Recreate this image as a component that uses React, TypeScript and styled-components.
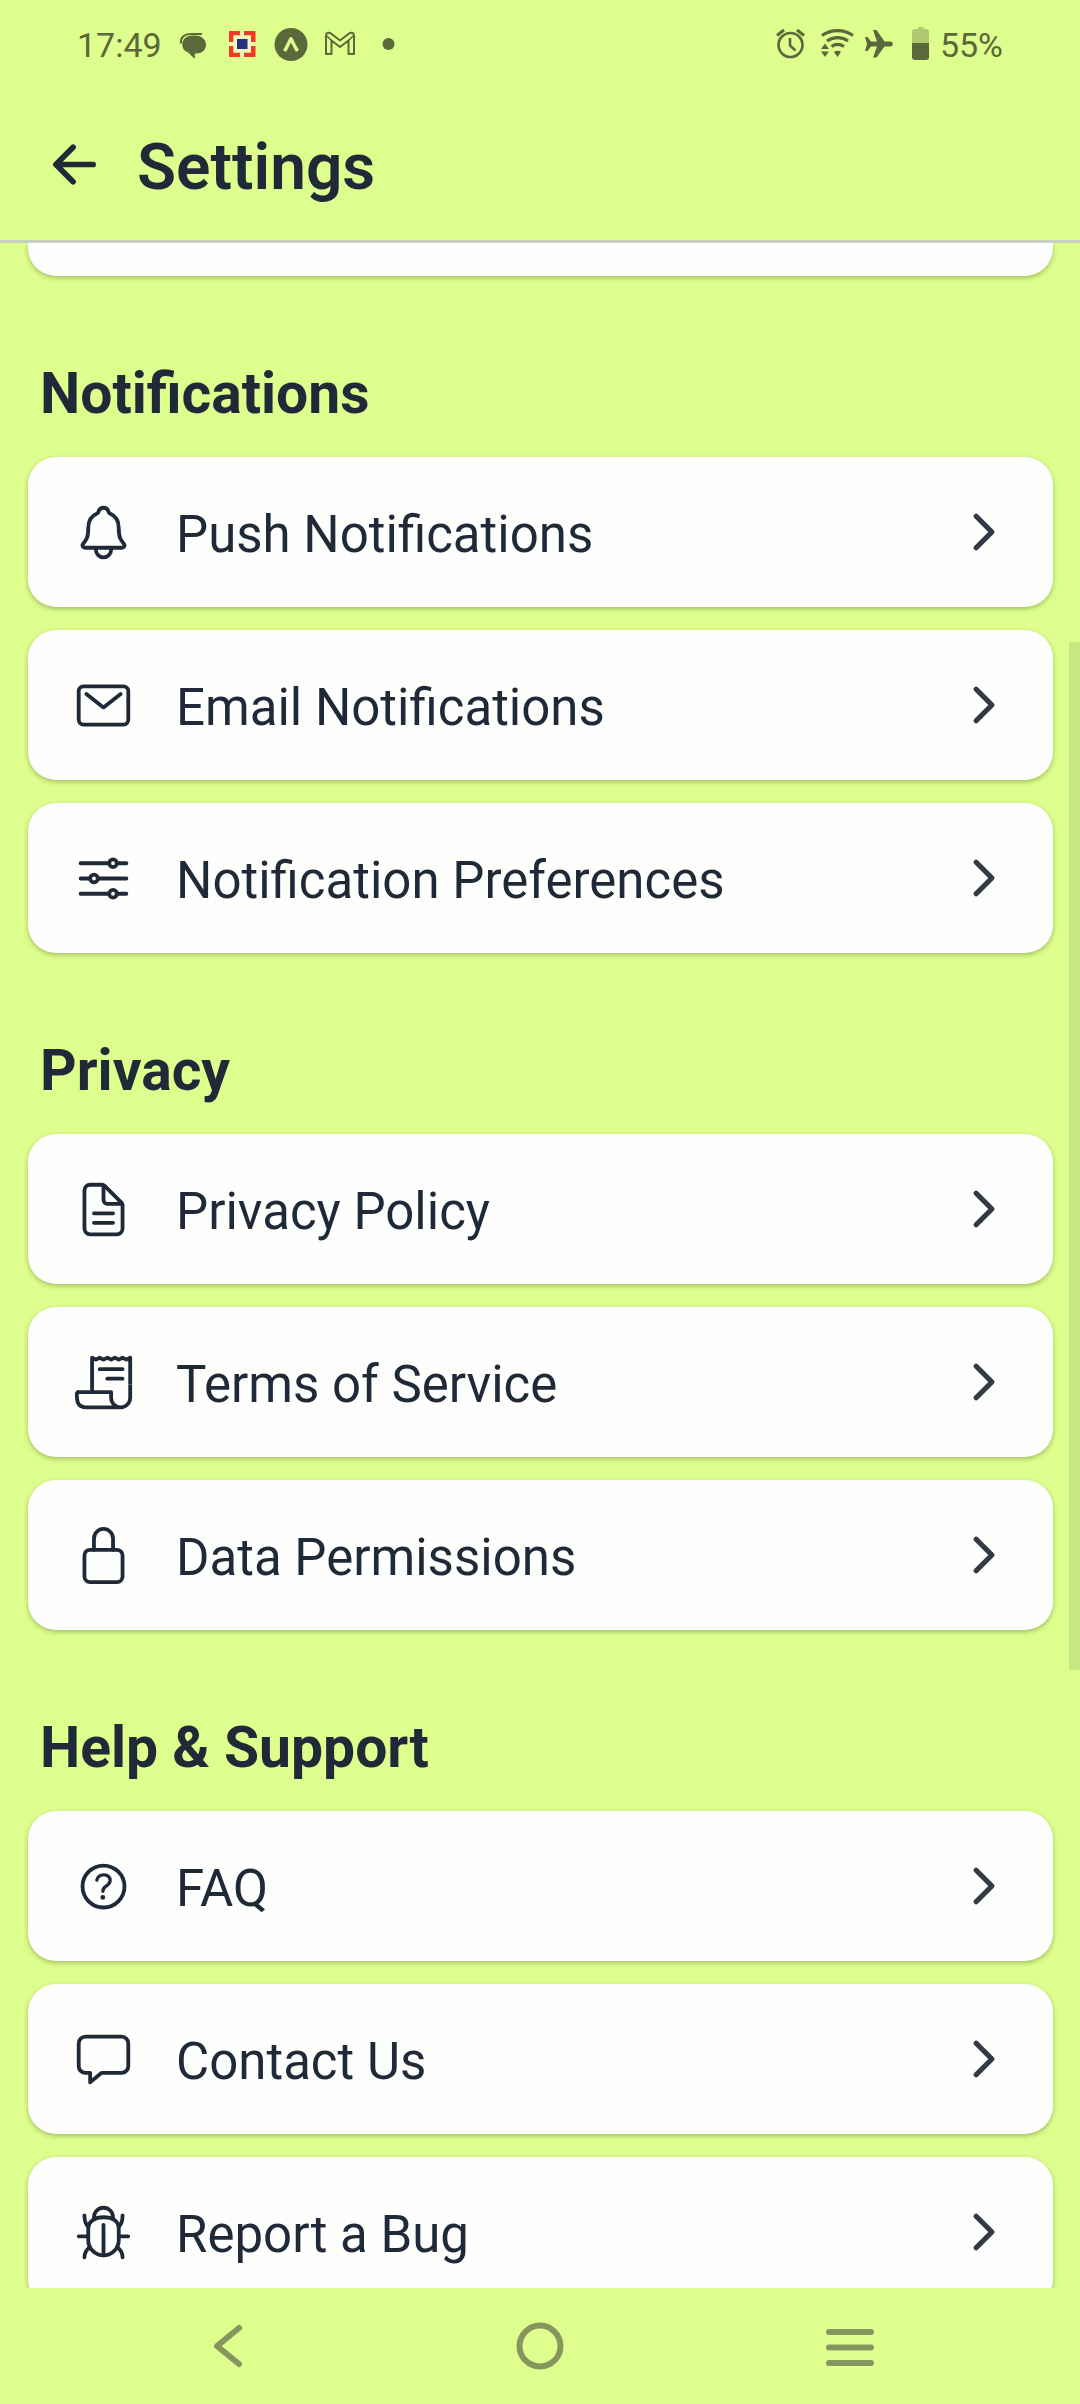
import React from 'react';
import styled, { createGlobalStyle } from 'styled-components';
import {
  IoArrowBack,
  IoBugOutline,
  IoChatboxOutline,
  IoChevronForward,
  IoDocumentTextOutline,
  IoHelpCircleOutline,
  IoLockClosedOutline,
  IoMailOutline,
  IoNotificationsOutline,
  IoOptionsOutline,
  IoReceiptOutline,
} from 'react-icons/io5';
import type { IconType } from 'react-icons';

const colors = {
  page: '#deff8e',
  card: '#fefffd',
  ink: '#1f2937',
  chevron: '#333a43',
  status: '#5a683a',
  nav: '#87965f',
  line: '#c9cec2',
};

const GlobalStyle = createGlobalStyle`
  * { box-sizing: border-box; }
  body {
    margin: 0;
    background: ${colors.page};
    color: ${colors.ink};
    font-family: Roboto, "Noto Sans", sans-serif;
  }
  button {
    border: 0;
    padding: 0;
    background: none;
    color: inherit;
    font: inherit;
    cursor: pointer;
  }
`;

const Screen = styled.div`
  position: relative;
  display: flex;
  flex-direction: column;
  height: 100vh;
  overflow: hidden;
`;

const StatusBar = styled.div`
  flex: none;
  display: flex;
  justify-content: space-between;
  align-items: center;
  height: 88px;
  padding: 0 77px;
  color: ${colors.status};
  font-size: 34px;
  line-height: 40px;
`;

const StatusGroup = styled.div<{ $gap: number }>`
  display: flex;
  align-items: center;
  gap: ${(p) => p.$gap}px;

  svg {
    display: block;
    flex: none;
  }
`;

const StatusText = styled.span`
  padding-top: 2px;
`;

const Header = styled.header`
  flex: none;
  display: flex;
  align-items: center;
  gap: 32px;
  height: 155px;
  padding: 0 44px;
  border-bottom: 3px solid ${colors.line};
`;

const BackButton = styled.button`
  display: flex;
  font-size: 61px;
`;

const PageTitle = styled.h1`
  margin: 0;
  padding-top: 8px;
  font-size: 64px;
  line-height: 76px;
  font-weight: 600;
`;

const Content = styled.main`
  flex: 1;
  min-height: 0;
  overflow: hidden;
  padding: 0 27px 0 28px;
`;

const cardShadow = '0 2px 5px rgba(40, 50, 10, 0.32)';

const CardEnd = styled.div`
  height: 33px;
  border-radius: 0 0 28px 28px;
  background: ${colors.card};
  box-shadow: ${cardShadow};
`;

const Section = styled.section`
  padding-top: 85px;
`;

const SectionTitle = styled.h2`
  margin: 0 0 30px;
  padding: 0 12px;
  font-size: 57px;
  line-height: 66px;
  font-weight: 700;
`;

const List = styled.div`
  display: flex;
  flex-direction: column;
  gap: 23px;
`;

const Row = styled.button`
  display: flex;
  align-items: center;
  min-height: 150px;
  padding: 0 41px 0 42px;
  border-radius: 28px;
  background: ${colors.card};
  box-shadow: ${cardShadow};
  text-align: left;
`;

const RowIcon = styled.span`
  flex: none;
  display: flex;
  justify-content: center;
  width: 66px;
  font-size: 61px;
`;

const RowLabel = styled.span`
  flex: 1;
  padding: 6px 0 0 40px;
  font-size: 51px;
  line-height: 60px;
`;

const RowChevron = styled(IoChevronForward)`
  flex: none;
  color: ${colors.chevron};
  font-size: 56px;
`;

const ScrollThumb = styled.div`
  position: absolute;
  top: 642px;
  right: 0;
  width: 11px;
  height: 1028px;
  background: rgba(20, 20, 40, 0.1);
`;

const NavBar = styled.nav`
  flex: none;
  display: grid;
  grid-template-columns: repeat(3, 1fr);
  height: 116px;
  padding: 0 73px;
  color: ${colors.nav};
`;

const NavButton = styled.button`
  display: flex;
  align-items: center;
  justify-content: center;
`;

interface Item {
  label: string;
  Icon: IconType;
}

const sections: { title: string; items: Item[] }[] = [
  {
    title: 'Notifications',
    items: [
      { label: 'Push Notifications', Icon: IoNotificationsOutline },
      { label: 'Email Notifications', Icon: IoMailOutline },
      { label: 'Notification Preferences', Icon: IoOptionsOutline },
    ],
  },
  {
    title: 'Privacy',
    items: [
      { label: 'Privacy Policy', Icon: IoDocumentTextOutline },
      { label: 'Terms of Service', Icon: IoReceiptOutline },
      { label: 'Data Permissions', Icon: IoLockClosedOutline },
    ],
  },
  {
    title: 'Help & Support',
    items: [
      { label: 'FAQ', Icon: IoHelpCircleOutline },
      { label: 'Contact Us', Icon: IoChatboxOutline },
      { label: 'Report a Bug', Icon: IoBugOutline },
    ],
  },
];

const ChatIcon = () => (
  <svg width="36" height="36" viewBox="0 0 36 36" fill="currentColor">
    <path d="M17 9.500h3.500c6 0 10.500 4 10.500 9.300s-4 8.700-9 8.700h-2.200v5.500l-6.300-6.300C9.500 25 7.300 22.500 7.300 18.500c0-5.200 4.200-9 9.700-9z" />
    <path d="M6 17.500C5.200 11.500 9.500 8 15 8h12" fill="none" stroke="currentColor" strokeWidth="2" />
  </svg>
);

const BankIcon = () => (
  <svg width="36" height="36" viewBox="0 0 36 36">
    <path
      d="M5 5h11v4.500H9.500V16H5zM20 5h11.500v11H27V9.500h-7zM5 20h4.500v6.500H16V31H5zM27 20h4.500v11H20v-4.500h7z"
      fill="#f03a26"
    />
    <path d="M16 5h4v4.500h-4zM16 26.500h4V31h-4zM5 16h4.500v4H5zM27 16h4.500v4H27z" fill="#eef2b0" />
    <path d="M9.500 9.500H27v17H9.500z" fill="#eef7b4" />
    <path d="M13 13h10.500v10H13z" fill="#2a2f86" />
  </svg>
);

const ExpoIcon = () => (
  <svg width="36" height="36" viewBox="0 0 36 36">
    <circle cx="18" cy="18.500" r="16.500" fill="currentColor" />
    <path d="M11.500 25c3-4.500 4.500-9 6.300-12.300C19.800 16 21.500 20.500 24.500 25" fill="none" stroke={colors.page} strokeWidth="3.400" strokeLinejoin="round" />
  </svg>
);

const GmailIcon = () => (
  <svg width="36" height="36" viewBox="0 0 36 36" fill="none" stroke="currentColor" strokeWidth="2" strokeLinejoin="round">
    <path d="M4 28V9.500C4 6.500 7 6 9 7.500l9 7 9-7c2-1.500 5-1 5 2V28h-5.500V14.500L18 21l-8.500-6.500V28z" />
    <path d="M4.500 9.500l5 5M31.500 9.500l-5 5" strokeWidth="1.500" />
  </svg>
);

const DotIcon = () => (
  <svg width="36" height="36" viewBox="0 0 36 36" fill="currentColor">
    <circle cx="17.500" cy="18" r="6" />
  </svg>
);

const AlarmIcon = () => (
  <svg width="36" height="36" viewBox="0 0 36 36" fill="none" stroke="currentColor" strokeWidth="2.600">
    <circle cx="16.500" cy="19" r="12" />
    <path d="M16 12v7.500l5.500 5" />
    <path d="M3 9.500l7-5.500M23 4l7 5.500" strokeWidth="3" />
  </svg>
);

const WifiIcon = () => (
  <svg width="34" height="36" viewBox="0 0 34 36" fill="none" stroke="currentColor" strokeWidth="3.200">
    <path d="M2 9.500c9-6.500 22-6.500 31 0" />
    <path d="M7 15c6.500-4.500 15-4.500 21 0" />
    <path d="M11.500 20.500c4-2.700 8.500-2.700 12.500 0" />
    <path d="M1 23l4-5.500L9 23zM1 25.500h8l-4 5.500zM14 26c2-1.700 5-1.700 7 0l-3.500 5z" fill="currentColor" stroke="none" />
  </svg>
);

const PlaneIcon = () => (
  <svg width="38" height="36" viewBox="0 0 38 36" fill="currentColor">
    <path d="M1 11h2.500L7 15.500h6L9 4h3.500l8 11.500h6c3 0 3 5 0 5h-6l-8 11H9l4-11H7L3.500 25H1l2-7z" />
  </svg>
);

const BatteryIcon = () => (
  <svg width="18" height="36" viewBox="0 0 18 36" fill="currentColor">
    <path d="M6 1h5.500v2H14a3 3 0 0 1 3 3v11H0V6a3 3 0 0 1 3-3h3z" opacity="0.35" />
    <path d="M0 17h17v14a3 3 0 0 1-3 3H3a3 3 0 0 1-3-3z" />
  </svg>
);

export default function App() {
  return (
    <>
      <GlobalStyle />
      <Screen>
        <StatusBar>
          <StatusGroup $gap={13}>
            <StatusText>17:49</StatusText>
            <ChatIcon />
            <BankIcon />
            <ExpoIcon />
            <GmailIcon />
            <DotIcon />
          </StatusGroup>
          <StatusGroup $gap={10}>
            <AlarmIcon />
            <WifiIcon />
            <PlaneIcon />
            <BatteryIcon />
            <StatusText>55%</StatusText>
          </StatusGroup>
        </StatusBar>

        <Header>
          <BackButton aria-label="Back">
            <IoArrowBack />
          </BackButton>
          <PageTitle>Settings</PageTitle>
        </Header>

        <Content>
          <CardEnd />
          {sections.map(({ title, items }) => (
            <Section key={title}>
              <SectionTitle>{title}</SectionTitle>
              <List>
                {items.map(({ label, Icon }) => (
                  <Row key={label}>
                    <RowIcon>
                      <Icon />
                    </RowIcon>
                    <RowLabel>{label}</RowLabel>
                    <RowChevron />
                  </Row>
                ))}
              </List>
            </Section>
          ))}
        </Content>

        <ScrollThumb />

        <NavBar>
          <NavButton aria-label="Go back">
            <svg width="36" height="50" viewBox="0 0 36 50" fill="none" stroke="currentColor" strokeWidth="6" strokeLinecap="round" strokeLinejoin="round">
              <path d="M28 7L6 25l22 18" />
            </svg>
          </NavButton>
          <NavButton aria-label="Home">
            <svg width="50" height="50" viewBox="0 0 50 50" fill="none" stroke="currentColor" strokeWidth="6">
              <circle cx="25" cy="25" r="20.500" />
            </svg>
          </NavButton>
          <NavButton aria-label="Recent apps">
            <svg width="50" height="50" viewBox="0 0 50 50" stroke="currentColor" strokeWidth="6" strokeLinecap="round">
              <path d="M3 11h42M3 26.500h42M3 42h42" />
            </svg>
          </NavButton>
        </NavBar>
      </Screen>
    </>
  );
}
